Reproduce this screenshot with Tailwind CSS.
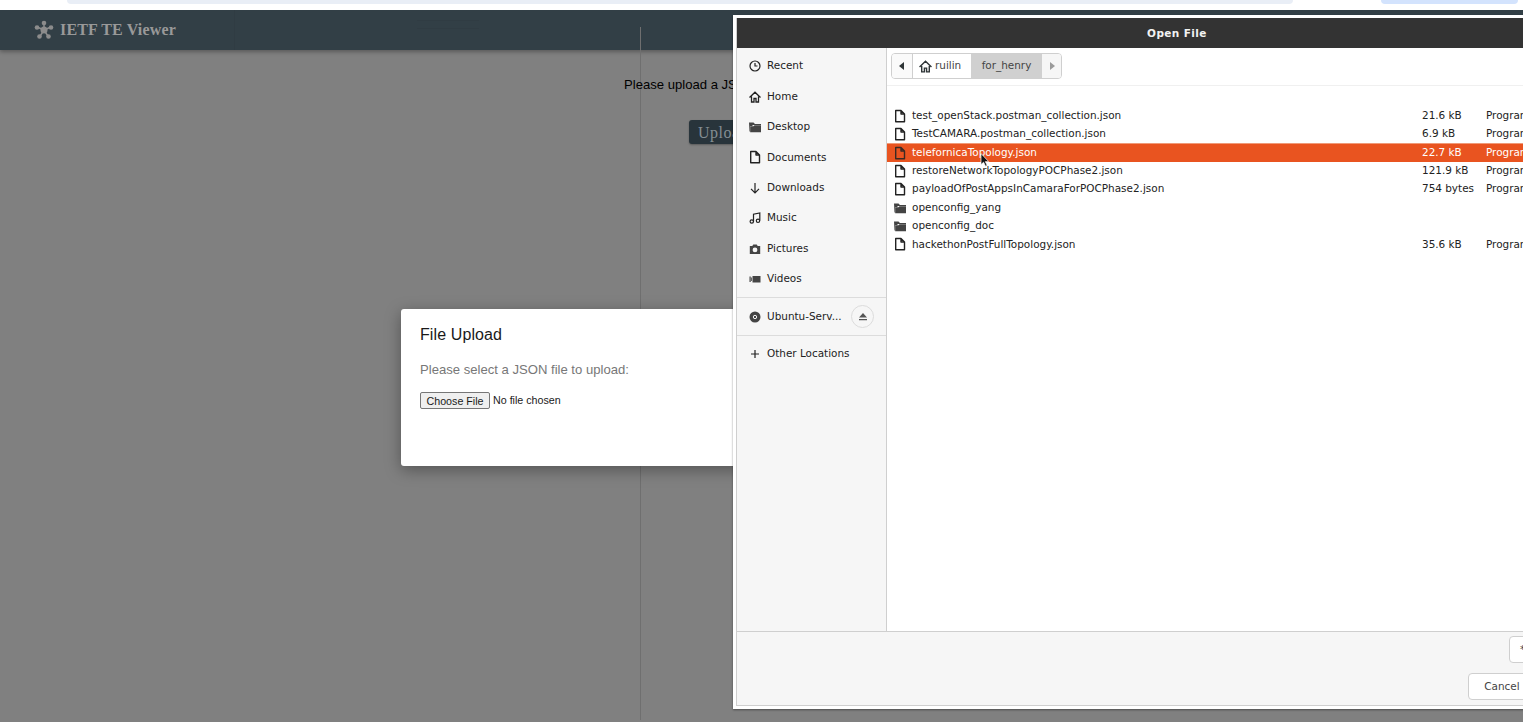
<!DOCTYPE html>
<html lang="en">
  <head>
    <meta charset="UTF-8" />
    <title>IETF TE Viewer</title>
    <script src="https://cdn.jsdelivr.net/npm/@tailwindcss/browser@4"></script>
  </head>
  <body class="bg-[#808080]">
    <svg width="0" height="0" class="absolute">
      <symbol id="file" viewBox="0 0 14 14">
        <path d="M2.700 1.500h5.300l3.500 3.500v7.700h-8.800z M8 1.500v3.500h3.500" fill="none" stroke="currentColor" stroke-width="1.400" stroke-linejoin="round" />
      </symbol>
      <symbol id="folder" viewBox="0 0 14 14">
        <path d="M1 2.500h4.500l1.500 1.500h6v1h-8l-1 1h-1.800v5.500h-.7z" fill="currentColor" />
        <path d="M2.200 6.200h3.300l1-1h6.500v7h-10.800z" fill="currentColor" />
      </symbol>
    </svg>

    <div class="relative h-[722px] w-[1523px] overflow-hidden font-['Liberation_Sans',sans-serif]">
      <!-- browser strip -->
      <div class="h-[10px] bg-white relative">
        <div class="absolute left-[67px] top-0 h-[4px] w-[1226px] rounded-b-[8px] bg-[#e9eef6]"></div>
        <div class="absolute left-[1381px] top-0 h-[4px] w-[137px] rounded-b-[8px] bg-[#d3e3fd]"></div>
      </div>

      <!-- app header -->
      <header class="flex h-[40px] items-center bg-[#323f46] pl-[34px] shadow-[0_2px_4px_rgba(0,0,0,0.3)]">
        <svg width="20" height="20" viewBox="0 0 20 20" class="text-[#8c8c8c]">
          <g stroke="currentColor" stroke-width="1.500"><path d="M10 10V3M10 10L3 7M10 10l7-3M10 10l-4.500 7M10 10l4.500 7" /></g>
          <g fill="currentColor">
            <circle cx="10" cy="10" r="3.500" /><circle cx="10" cy="3" r="2.300" /><circle cx="3" cy="7.500" r="2.300" />
            <circle cx="17" cy="7.500" r="2.300" /><circle cx="5.500" cy="16.500" r="2.300" /><circle cx="14.500" cy="16.500" r="2.300" />
          </g>
        </svg>
        <span class="ml-[6px] font-['Liberation_Serif',serif] text-[16px] font-bold tracking-[0.15px] text-[#999999]">IETF TE Viewer</span>
      </header>

      <!-- faint lines of the page below the overlay -->
      <div class="absolute left-[640px] top-[27px] h-[693px] w-px bg-[#6f6f6f]"></div>
      <div class="absolute left-[234px] top-[10px] h-[40px] w-px bg-[#303c43]"></div>
      <div class="absolute left-[417px] top-[20px] h-px w-[62px] bg-[#303c43]"></div>
      <div class="absolute left-[417px] top-[28px] h-px w-[62px] bg-[#303c43]"></div>

      <main>
        <p class="absolute left-[624px] top-[77px] whitespace-nowrap text-[13.100px] leading-[16px] text-black">Please upload a JSON file to continue</p>
        <button class="absolute left-[689px] top-[120px] flex h-[24px] w-[90px] items-center rounded-[3px] bg-[#28343b] pl-[9px] pt-[2px] font-['Liberation_Serif',serif] text-[16px] tracking-[0.5px] text-[#848e93] shadow-[0_1px_2px_rgba(0,0,0,0.3)]">Upload</button>
      </main>

      <!-- file upload modal -->
      <section class="absolute left-[401px] top-[309px] h-[157px] w-[600px] rounded-[3px] bg-white pl-[19px] pt-[17px] shadow-[0_4px_16px_rgba(0,0,0,0.35)]">
        <h2 class="text-[16px] leading-[18px] tracking-[0.1px] text-[#1a1a1a]">File Upload</h2>
        <p class="mt-[18px] text-[13.100px] leading-[16px] text-[#777777]">Please select a JSON file to upload:</p>
        <div class="mt-[14px] flex items-center text-[10.700px] text-[#1a1a1a]">
          <button class="h-[17px] w-[70px] rounded-[2px] border border-[#767676] bg-[#efefef] leading-[14px]">Choose File</button>
          <span class="ml-[3px]">No file chosen</span>
        </div>
      </section>

      <!-- GTK open file dialog -->
      <div class="absolute left-[733px] top-[15px] flex h-[694px] w-[884px] flex-col bg-white pl-[3px] pt-[3px] pb-[3px] font-['DejaVu_Sans',sans-serif] text-[10.450px] text-[#222222] shadow-[0_1px_2px_rgba(0,0,0,0.4)]">
        <div class="flex h-[688px] flex-col border-l border-b border-[#cfcfcf]">
          <div class="flex h-[30px] shrink-0 items-center justify-center bg-[#333333] pt-[1px] text-[10.500px] font-bold tracking-[0.4px] text-[#f2f2f2]">Open File</div>

          <div class="flex min-h-0 flex-1">
            <!-- places -->
            <aside class="w-[150px] shrink-0 border-r border-[#cfcfcf] bg-[#f6f6f6] pt-[3px]">
              <div class="flex h-[30.400px] items-center gap-[6px] pl-[12px]">
                <svg width="12" height="12" viewBox="0 0 12 12" fill="none" stroke="currentColor" stroke-width="1.200"><circle cx="6" cy="6" r="5" /><path d="M6 3v3h2.500" /></svg>
                <span>Recent</span>
              </div>
              <div class="flex h-[30.400px] items-center gap-[6px] pl-[12px]">
                <svg width="12" height="12" viewBox="0 0 12 12" fill="none" stroke="currentColor" stroke-width="1.300"><path d="M.5 6.500L6 1.200l5.500 5.300M2.500 5.500V11h2.500V7.500h2V11h2.500V5.500" /></svg>
                <span>Home</span>
              </div>
              <div class="flex h-[30.400px] items-center gap-[5px] pl-[11px]">
                <svg width="14" height="14" class="text-[#444444]"><use href="#folder" /></svg>
                <span>Desktop</span>
              </div>
              <div class="flex h-[30.400px] items-center gap-[5px] pl-[11px]">
                <svg width="14" height="14"><use href="#file" /></svg>
                <span>Documents</span>
              </div>
              <div class="flex h-[30.400px] items-center gap-[6px] pl-[12px]">
                <svg width="12" height="12" viewBox="0 0 12 12" fill="none" stroke="currentColor" stroke-width="1.200"><path d="M6 1v9.500M2 6.800l4 4 4-4" /></svg>
                <span>Downloads</span>
              </div>
              <div class="flex h-[30.400px] items-center gap-[6px] pl-[12px]">
                <svg width="12" height="12" viewBox="0 0 12 12" fill="none" stroke="currentColor" stroke-width="1.200"><path d="M4.500 9.500V2.200L10.800 1v7.500" /><circle cx="2.800" cy="9.500" r="1.700" /><circle cx="9" cy="8.800" r="1.700" /></svg>
                <span>Music</span>
              </div>
              <div class="flex h-[30.400px] items-center gap-[6px] pl-[12px]">
                <svg width="12" height="12" viewBox="0 0 12 12"><path fill-rule="evenodd" fill="#444444" d="M.8 3h2.500l1-1.500h3.400l1 1.500h2.500v8H.8zM6 4.500a2.400 2.400 0 1 0 0 4.800 2.400 2.400 0 0 0 0-4.800z" /></svg>
                <span>Pictures</span>
              </div>
              <div class="flex h-[30.400px] items-center gap-[6px] pl-[12px]">
                <svg width="12" height="12" viewBox="0 0 12 12" fill="#444444"><path d="M3.500 3h8v6.500h-8zM.5 3.500h1.200v5.500H.5zM2.200 4.500h.8v3.500h-.8z" /></svg>
                <span>Videos</span>
              </div>
              <div class="mt-[3px] h-px bg-[#dcdcdc]"></div>
              <div class="flex h-[37px] items-center gap-[6px] pl-[12px]">
                <svg width="12" height="12" viewBox="0 0 12 12"><circle cx="6" cy="6" r="5.500" fill="#444444" /><circle cx="6" cy="6" r="1.700" fill="none" stroke="#f6f6f6" /></svg>
                <span class="w-[78px] whitespace-nowrap">Ubuntu-Serv...</span>
                <span class="flex h-[23px] w-[23px] items-center justify-center rounded-full border border-[#dcdcdc]">
                  <svg width="10" height="10" viewBox="0 0 10 10" fill="#555555"><path d="M5 1l4 4.500H1zM1 7h8v1.300H1z" /></svg>
                </span>
              </div>
              <div class="h-[1px] bg-[#dcdcdc]"></div>
              <div class="flex h-[36px] items-center gap-[6px] pl-[12px]">
                <svg width="12" height="12" viewBox="0 0 12 12" stroke="currentColor" stroke-width="1.200"><path d="M6 2v8M2 6h8" /></svg>
                <span>Other Locations</span>
              </div>
            </aside>

            <!-- file list -->
            <div class="min-w-0 flex-1 bg-white">
              <div class="h-[38px] border-b border-[#f0f0f0] pl-[4px] pt-[5px]">
                <nav class="flex h-[26px] w-[171px] overflow-hidden rounded-[4px] border border-[#cfcfcf] text-[#444444]">
                  <span class="flex w-[21px] items-center justify-center border-r border-[#cfcfcf] bg-[#fafafa]">
                    <svg width="6" height="8" viewBox="0 0 6 8" fill="#2e3436"><path d="M5 0v8L0 4z" /></svg>
                  </span>
                  <span class="flex w-[58px] items-center gap-[3px] bg-white pl-[6px]">
                    <svg width="13" height="13" viewBox="0 0 12 12" fill="none" stroke="#2e3436" stroke-width="1.300"><path d="M.5 6.500L6 1.200l5.500 5.300M2.500 5.500V11h2.500V7.500h2V11h2.500V5.500" /></svg>
                    <span>ruilin</span>
                  </span>
                  <span class="flex w-[71px] items-center justify-center bg-[#d0d0d0]">for_henry</span>
                  <span class="flex flex-1 items-center justify-center bg-[#f6f6f6]">
                    <svg width="6" height="8" viewBox="0 0 6 8" fill="#9a9a9a"><path d="M1 0v8l5-4z" /></svg>
                  </span>
                </nav>
              </div>

              <ul class="pt-[20.500px]">
                <li class="flex h-[18.400px] items-center pl-[6px]">
                  <svg width="14" height="14" class="shrink-0"><use href="#file" /></svg>
                  <span class="ml-[5px] w-[510px] whitespace-nowrap">test_openStack.postman_collection.json</span>
                  <span class="w-[64px]">21.6 kB</span><span>Program</span>
                </li>
                <li class="flex h-[18.400px] items-center pl-[6px]">
                  <svg width="14" height="14" class="shrink-0"><use href="#file" /></svg>
                  <span class="ml-[5px] w-[510px] whitespace-nowrap">TestCAMARA.postman_collection.json</span>
                  <span class="w-[64px]">6.9 kB</span><span>Program</span>
                </li>
                <li class="flex h-[18.400px] items-center border-t border-[#f09a78] bg-[#e95420] pl-[6px] text-white">
                  <svg width="14" height="14" class="shrink-0 text-[#3a2a24]"><use href="#file" /></svg>
                  <span class="ml-[5px] w-[510px] whitespace-nowrap">telefornicaTopology.json</span>
                  <span class="w-[64px]">22.7 kB</span><span>Program</span>
                </li>
                <li class="flex h-[18.400px] items-center pl-[6px]">
                  <svg width="14" height="14" class="shrink-0"><use href="#file" /></svg>
                  <span class="ml-[5px] w-[510px] whitespace-nowrap">restoreNetworkTopologyPOCPhase2.json</span>
                  <span class="w-[64px]">121.9 kB</span><span>Program</span>
                </li>
                <li class="flex h-[18.400px] items-center pl-[6px]">
                  <svg width="14" height="14" class="shrink-0"><use href="#file" /></svg>
                  <span class="ml-[5px] w-[510px] whitespace-nowrap">payloadOfPostAppsInCamaraForPOCPhase2.json</span>
                  <span class="w-[64px]">754 bytes</span><span>Program</span>
                </li>
                <li class="flex h-[18.400px] items-center pl-[6px]">
                  <svg width="14" height="14" class="shrink-0 text-[#444444]"><use href="#folder" /></svg>
                  <span class="ml-[5px] w-[510px] whitespace-nowrap">openconfig_yang</span>
                </li>
                <li class="flex h-[18.400px] items-center pl-[6px]">
                  <svg width="14" height="14" class="shrink-0 text-[#444444]"><use href="#folder" /></svg>
                  <span class="ml-[5px] w-[510px] whitespace-nowrap">openconfig_doc</span>
                </li>
                <li class="flex h-[18.400px] items-center pl-[6px]">
                  <svg width="14" height="14" class="shrink-0"><use href="#file" /></svg>
                  <span class="ml-[5px] w-[510px] whitespace-nowrap">hackethonPostFullTopology.json</span>
                  <span class="w-[64px]">35.6 kB</span><span>Program</span>
                </li>
              </ul>
            </div>
          </div>

          <!-- footer -->
          <div class="flex h-[74px] shrink-0 flex-col items-end gap-[10px] border-t border-[#cfcfcf] bg-[#f6f6f6] pr-[14px] pt-[4px] text-[#444444]">
            <button class="h-[27px] w-[94px] rounded-[4px] border border-[#cfcfcf] bg-white pl-[10px] text-left">*</button>
            <div class="flex gap-[6px]">
              <button class="h-[27px] w-[65px] rounded-[4px] border border-[#cfcfcf] bg-white pl-[3px]">Cancel</button>
              <button class="h-[27px] w-[64px] rounded-[4px] border border-[#cfcfcf] bg-white">Open</button>
            </div>
          </div>
        </div>
      </div>

      <!-- mouse cursor -->
      <svg class="absolute left-[980px] top-[153px]" width="10" height="14" viewBox="0 0 10 14">
        <path d="M1 .5v11l2.600-2.300 1.900 4 1.700-.8-1.900-3.800h3.400z" fill="#111111" stroke="#ffffff" stroke-width=".7" />
      </svg>
    </div>
  </body>
</html>
